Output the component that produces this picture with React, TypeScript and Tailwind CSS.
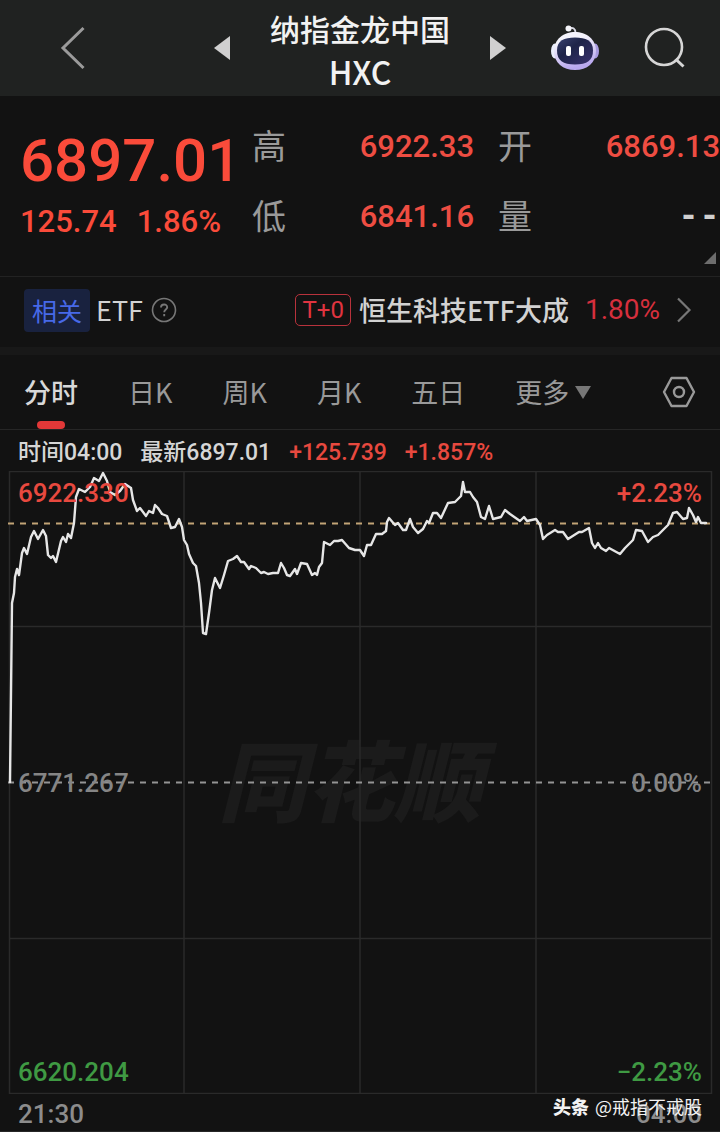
import React, { useState } from 'react';

const PRICE_POINTS =
  '10,311 11,222 12,132 14,122 15,106 17,98 19,104 22,82 24,77 27,83 31,66 34,60 38,68 43,59 46,65 48,84 51,87 53,85 56,91 61,70 63,66 66,71 68,63 71,67 74,52 76,26 79,18 85,21 90,16 94,7 99,10 103,2 107,10 110,21 115,24 120,20 125,13 131,17 133,29 137,40 140,37 146,45 149,40 153,42 155,34 158,37 162,43 167,45 171,57 175,56 179,48 182,56 184,69 187,74 189,83 193,92 196,95 199,112 201,132 203,162 206,163 209,142 212,119 215,107 220,117 224,104 228,90 233,88 237,85 ' +
  '241,91 244,91 249,98 251,95 256,97 261,102 264,101 268,103 273,102 278,102 281,92 284,97 287,104 290,105 295,98 297,103 301,92 307,93 312,104 315,102 317,104 319,96 322,92 324,71 330,74 334,70 338,70 342,69 349,77 355,79 360,79 364,85 367,74 371,74 376,63 382,63 386,60 387,51 389,47 395,54 398,52 403,59 406,59 410,48 413,56 418,62 ' +
  '423,58 427,50 429,52 433,42 437,42 441,47 448,32 455,31 461,25 463,11 465,21 470,21 473,26 477,31 481,46 485,48 489,35 493,48 501,46 505,39 510,43 520,50 524,46 527,50 536,48 540,54 543,68 547,64 555,59 558,61 563,61 568,68 579,61 582,61 589,57 592,72 595,77 598,72 601,77 606,80 609,77 620,83 625,77 633,69 636,59 642,60 648,71 653,66 658,64 668,54 673,42 677,41 683,48 687,47 689,37 693,44 696,51 698,46 701,52 706,52';

const TABS = ['分时', '日K', '周K', '月K', '五日'];

const RobotIcon = () => (
  <svg width="50" height="48" viewBox="0 0 50 48" fill="none">
    <defs>
      <linearGradient id="robotHead" x1="0" y1="0" x2="0.3" y2="1">
        <stop offset="0.3" stopColor="#f4f3fc" />
        <stop offset="1" stopColor="#b9a8ee" />
      </linearGradient>
      <linearGradient id="robotFace" x1="0" y1="0" x2="1" y2="1">
        <stop stopColor="#3a4270" />
        <stop offset="0.4" stopColor="#1e2448" />
        <stop offset="1" stopColor="#39316e" />
      </linearGradient>
    </defs>
    <path d="M19 4.500c4-1.500 6.500 0 6.500 4.500" stroke="#d9d9e4" strokeWidth="1.800" />
    <circle cx="18.500" cy="4.500" r="3" fill="#f5f5fa" />
    <ellipse cx="5" cy="27" rx="4" ry="7.500" fill="#e9edfb" />
    <ellipse cx="45" cy="27" rx="4" ry="7.500" fill="#a99be0" />
    <path d="M25 8C36 8 46 15 46 27S37 46 25 46 4 39 4 27 14 8 25 8z" fill="url(#robotHead)" />
    <path d="M25 13.500c11 0 18 3 18 13s-6 14-18 14-18-4-18-14 7-13 18-13z" fill="url(#robotFace)" />
    <rect x="16" y="22" width="5" height="10" rx="2" fill="#fff" />
    <rect x="29" y="22" width="5" height="10" rx="2" fill="#fff" />
  </svg>
);

const SearchIcon = () => (
  <svg width="42" height="42" viewBox="0 0 42 42" fill="none" stroke="#d6d6d6" strokeWidth="2.600">
    <circle cx="20" cy="20" r="18" />
    <path d="M31.500 32l8 7.500" strokeWidth="3" />
  </svg>
);

const Header = () => (
  <header className="grid h-24 grid-cols-[1fr_auto_1fr] items-center bg-[#202221]">
    <div className="flex items-center justify-between pr-10 pl-[60px]">
      <button aria-label="返回">
        <svg width="26" height="44" viewBox="0 0 26 44" fill="none" stroke="#9b9b9b" strokeWidth="3">
          <path d="M23.500 2L3 22l20.500 20" />
        </svg>
      </button>
      <button aria-label="上一个">
        <svg width="16" height="24" viewBox="0 0 16 24" fill="#d0d0d0">
          <path d="M16 0v24L0 12z" />
        </svg>
      </button>
    </div>
    <h1 className="pt-1 text-center text-[30px] leading-[43px] font-medium text-[#f2f2f2]">
      纳指金龙中国
      <span className="block text-[32px]">HXC</span>
    </h1>
    <div className="flex items-center justify-between pr-[34px] pl-10">
      <button aria-label="下一个">
        <svg width="16" height="24" viewBox="0 0 16 24" fill="#d0d0d0">
          <path d="M0 0v24l16-12z" />
        </svg>
      </button>
      <button aria-label="智能助手">
        <RobotIcon />
      </button>
      <button aria-label="搜索">
        <SearchIcon />
      </button>
    </div>
  </header>
);

interface QuoteItemProps {
  label: string;
  value: string;
  empty?: boolean;
}

const QuoteItem: React.FC<QuoteItemProps> = ({ label, value, empty }) => (
  <div className="flex h-[70px] items-center justify-between">
    <dt className="pb-1.5 text-[34px] text-[#9a9a9a]">{label}</dt>
    <dd
      className={
        empty
          ? "font-['Liberation_Mono',monospace] text-[35px] font-bold text-[#cfcfcf]"
          : "font-[Roboto,sans-serif] text-[31px] font-medium text-[#ee4d42]"
      }
    >
      {value}
    </dd>
  </div>
);

const Quote = () => (
  <section className="relative flex h-[181px] border-b border-[#222] pt-4">
    <div className="w-[35%] shrink-0 pl-5 font-[Roboto,sans-serif] font-medium text-[#fa4b3a]">
      <p className="pt-4 text-[60px] leading-[66px]">6897.01</p>
      <p className="flex gap-5 pt-2 text-[31px] leading-10">
        <span>125.74</span>
        <span>1.86%</span>
      </p>
    </div>
    <dl className="grid flex-1 grid-cols-2 content-start gap-x-6">
      <QuoteItem label="高" value="6922.33" />
      <QuoteItem label="开" value="6869.13" />
      <QuoteItem label="低" value="6841.16" />
      <QuoteItem label="量" value="--" empty />
    </dl>
    <button className="absolute right-1 bottom-3" aria-label="展开">
      <svg width="12" height="12" viewBox="0 0 12 12" fill="#6d6d6d">
        <path d="M12 0v12H0z" />
      </svg>
    </button>
  </section>
);

const RelatedEtf = () => (
  <section className="flex h-[78px] items-center justify-between border-b-8 border-[#181818] pr-7 pb-1 pl-6 text-[27px] whitespace-nowrap text-[#d2d2d2]">
    <div className="flex items-center">
      <span className="rounded-sm bg-[#19223f] px-2 text-[25px] leading-[43px] text-[#4769e8]">相关</span>
      <span className="pl-1.5">ETF</span>
      <button className="pl-2" aria-label="说明">
        <svg width="26" height="26" viewBox="0 0 26 26" fill="none" stroke="#777">
          <circle cx="13" cy="13" r="11.500" strokeWidth="1.600" />
          <path d="M10 10.500c0-4 6.200-4 6.200-.3 0 2.300-3 2.300-3 5M13.200 17v2.200" strokeWidth="1.900" />
        </svg>
      </button>
    </div>
    <a href="#etf" className="flex items-center">
      <span className="rounded-[5px] border border-[#b8323c] px-1.5 font-[Roboto,sans-serif] text-[24px] leading-[30px] text-[#e03440]">
        T+0
      </span>
      <span className="pl-2 font-medium">恒生科技ETF大成</span>
      <span className="pl-4 font-[Roboto,sans-serif] text-[28px] text-[#d62f3d]">1.80%</span>
      <svg className="ml-4" width="16" height="26" viewBox="0 0 16 26" fill="none" stroke="#777" strokeWidth="2.200">
        <path d="M2 1.500L13.500 13 2 24.500" />
      </svg>
    </a>
  </section>
);

const PeriodTabs = () => {
  const [active, setActive] = useState('分时');

  return (
    <nav className="flex h-[75px] items-center gap-[50px] border-b border-[#262626] pr-6 pl-6 text-[27px] whitespace-nowrap text-[#999]">
      {TABS.map((tab) => (
        <button
          key={tab}
          onClick={() => setActive(tab)}
          className={tab === active ? 'relative h-full font-medium text-[#d8d8d8]' : 'relative h-full'}
        >
          {tab}
          {tab === active && (
            <span className="absolute bottom-0 left-1/2 h-2 w-7 -translate-x-1/2 rounded bg-[#e23838]" />
          )}
        </button>
      ))}
      <button className="flex items-center gap-1.5">
        更多
        <svg width="16" height="13" viewBox="0 0 16 13" fill="#777">
          <path d="M0 0h16L8 13z" />
        </svg>
      </button>
      <button className="ml-auto" aria-label="图表设置">
        <svg width="34" height="32" viewBox="0 0 34 32" fill="none" stroke="#999" strokeWidth="2.400" strokeLinejoin="round">
          <path d="M9.500 2h15L32 16l-7.500 14h-15L2 16z" />
          <circle cx="17" cy="16" r="5" />
        </svg>
      </button>
    </nav>
  );
};

const Chart = () => (
  <section className="font-[Roboto,'Noto_Sans_CJK_SC',sans-serif]">
    <div className="flex h-[41px] items-center gap-[18px] px-[18px] pt-1.5 text-[23px] font-medium whitespace-nowrap text-[#d6d6d6]">
      <span>时间04:00</span>
      <span>最新6897.01</span>
      <span className="text-[#e8493f]">+125.739</span>
      <span className="text-[#e8493f]">+1.857%</span>
    </div>
    <div className="relative text-[26px] leading-8">
      <p className="absolute inset-x-0 top-1/2 -translate-y-1/2 pr-5 pb-3 text-center font-['Noto_Sans_CJK_SC',sans-serif] text-[88px] leading-none font-black text-[#1b1b1b] italic">
        同花顺
      </p>
      <svg className="relative block h-auto w-full" viewBox="0 0 720 623" fill="none">
        <path
          d="M9.500 .5h702v622h-702zM9 155.500h702M9 467.500h702M184 0v622M360 0v622M536 0v622"
          stroke="#2a2a2a"
          strokeWidth="1.500"
        />
        <path d="M8 311.500h703" stroke="#949494" strokeWidth="1.800" strokeDasharray="6 6" />
        <path d="M8 52.500h703" stroke="#c2a476" strokeWidth="1.800" strokeDasharray="6 6" />
        <polyline points={PRICE_POINTS} stroke="#e6e6e6" strokeWidth="2.400" strokeLinejoin="round" strokeLinecap="round" />
      </svg>
      <div className="absolute inset-0 flex flex-col justify-between px-[18px] py-1.5 font-medium">
        <div className="flex justify-between text-[#e8493f]">
          <span>6922.330</span>
          <span>+2.23%</span>
        </div>
        <div className="flex justify-between text-[#858585]">
          <span>6771.267</span>
          <span>0.00%</span>
        </div>
        <div className="flex justify-between text-[#3f9a43]">
          <span>6620.204</span>
          <span>−2.23%</span>
        </div>
      </div>
    </div>
    <div className="relative flex h-[38px] items-center justify-between border-b border-[#262626] px-[18px] pt-1 text-[26px] font-medium text-[#8c8c8c]">
      <span>21:30</span>
      <span>04:00</span>
      <p className="absolute top-0 right-[18px] flex items-center gap-1.5 font-['Noto_Sans_CJK_SC',sans-serif] text-[18px] leading-6 font-normal text-[#f2f2f2]">
        <b className="font-black">头条</b>
        <span>@戒指不戒股</span>
      </p>
    </div>
  </section>
);

const App = () => (
  <main
    lang="zh-CN"
    className="min-h-screen overflow-hidden bg-[#121212] font-['Noto_Sans_CJK_SC',sans-serif]"
  >
    <Header />
    <Quote />
    <RelatedEtf />
    <PeriodTabs />
    <Chart />
  </main>
);

export default App;
